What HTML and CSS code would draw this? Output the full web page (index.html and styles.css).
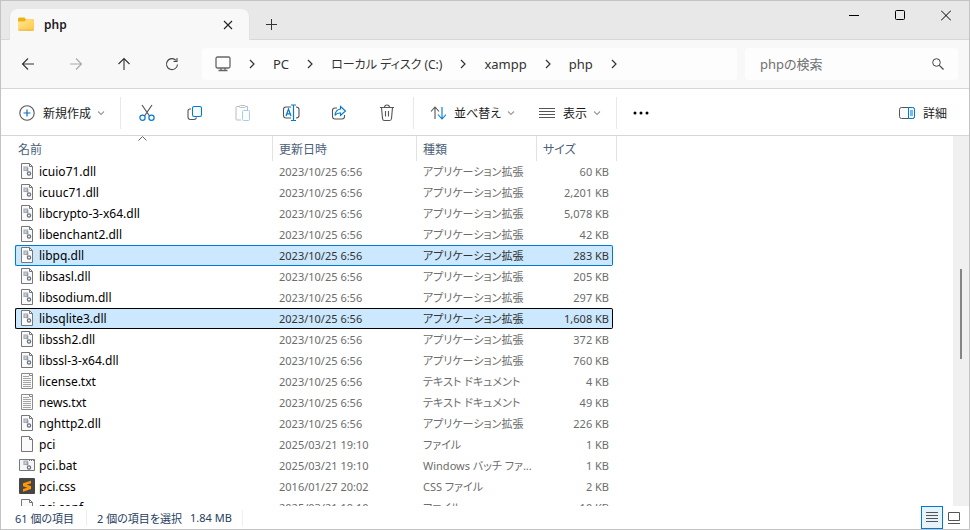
FILE: index.html
```
<!DOCTYPE html>
<html lang="ja">
<head>
<meta charset="utf-8">
<title>php</title>
<link rel="stylesheet" href="styles.css">
</head>
<body>
<svg class="defs" aria-hidden="true">
  <defs>
    <linearGradient id="folder-fill" x1="0" y1="0" x2="1" y2="1"><stop offset="0" stop-color="#ffe69b"/><stop offset="1" stop-color="#ffc93c"/></linearGradient>
  </defs>
  <symbol id="chevron" viewBox="0 0 8 10"><path d="M2 1l4 4-4 4" fill="none" stroke="#333" stroke-width="1.2"/></symbol>
  <symbol id="down" viewBox="0 0 8 6"><path d="M1 1.5l3 3 3-3" fill="none" stroke="#999" stroke-width="1.1"/></symbol>
  <symbol id="gears" viewBox="0 0 16 16">
    <path d="M5 4h3.500v3.500H5z" fill="#c8d0d9" stroke="#a3acb6" stroke-width="1.200"/>
    <circle cx="10" cy="10.500" r="1.600" fill="#fff" stroke="#68717c" stroke-width="1.300"/>
    <path d="M8.500 5v3.500" stroke="#8f99a4" stroke-width="1.500"/>
  </symbol>
  <symbol id="dll" viewBox="0 0 16 16">
    <path d="M2.5.5h8l3 3v12h-11z" fill="#fafafa" stroke="#777"/><path d="M10.5.5v3h3" fill="none" stroke="#777"/>
    <use href="#gears" width="16" height="16"/>
  </symbol>
  <symbol id="txt" viewBox="0 0 16 16">
    <path d="M2.5.5h11v15h-11z" fill="#fafafa" stroke="#8c8c8c"/><path d="M4 3.5h6M4 5.5h8M4 7.5h8M4 9.5h8M4 11.5h8M4 13.5h8" stroke="#a4a4a4"/><path d="M10.5.5v2h3" fill="none" stroke="#8c8c8c"/>
  </symbol>
  <symbol id="file" viewBox="0 0 16 16">
    <path d="M2.5.5h8l3 3v12h-11z" fill="#fafafa" stroke="#777"/><path d="M10.5.5v3h3" fill="none" stroke="#777"/>
  </symbol>
  <symbol id="bat" viewBox="0 0 16 16">
    <path d="M.5 2.5h15v11H.5z" fill="#f5f5f5" stroke="#777"/><path d="M10 3.5h1M12 3.5h1M14 3.5h1" stroke="#777"/>
    <use href="#gears" width="16" height="16"/>
  </symbol>
  <symbol id="subl" viewBox="0 0 16 16">
    <rect width="16" height="16" rx="1" fill="#464646"/><path d="M12 2.7v2.6L7.6 6.7 12 8.1v3L4 13.7v-2.6l4.4-1.4L4 8.3V5.300z" fill="#ff9800"/>
  </symbol>
</svg>
<main class="window">
  <header class="titlebar">
    <div class="tab">
      <svg class="i16" viewBox="0 0 16 16"><path d="M0 2Q0 .5 1.500.5h5L8 2.500h8v3H0z" fill="#f2b010"/><path d="M0 4.500h6.500L8.500 2.500H15q1 0 1 1v9q0 1-1 1H1q-1 0-1-1z" fill="url(#folder-fill)"/><path d="M.5 13.200h15" stroke="#e0a52a" stroke-width=".8"/></svg>
      <span class="tab-name">php</span>
      <button class="tab-close" aria-label="タブを閉じる"><svg width="10" height="10"><path d="M1 1l8 8M9 1L1 9" stroke="#222" stroke-width="1.1"/></svg></button>
    </div>
    <button class="new-tab" aria-label="新しいタブ"><svg width="11" height="11"><path d="M0 5.5h11M5.5 0v11" stroke="#333"/></svg></button>
    <div class="window-buttons">
      <button aria-label="最小化"><svg width="10" height="11"><path d="M0 5.5h10" stroke="#000"/></svg></button>
      <button aria-label="最大化"><svg width="10" height="11"><rect x=".5" y=".5" width="9" height="9" rx="1" fill="none" stroke="#000"/></svg></button>
      <button aria-label="閉じる"><svg width="10" height="11"><path d="M0 .5l10 10M10 .5l-10 10" stroke="#000"/></svg></button>
    </div>
  </header>
  <nav class="navbar">
    <div class="nav-buttons">
      <button aria-label="戻る"><svg width="14" height="14"><path d="M13 7H2M7 1.5L1.5 7 7 12.5" fill="none" stroke="#333" stroke-width="1.1"/></svg></button>
      <button aria-label="進む" disabled><svg width="14" height="14"><path d="M1 7h11M7 1.5L12.500 7 7 12.500" fill="none" stroke="#aaa" stroke-width="1.1"/></svg></button>
      <button aria-label="上へ"><svg width="14" height="14"><path d="M7 13V2M1.500 7L7 1.500 12.500 7" fill="none" stroke="#333" stroke-width="1.1"/></svg></button>
      <button aria-label="更新"><svg width="14" height="14"><path d="M12.500 7.500A5.500 5.500 0 1 1 11 3.300M12 1v3.500H8.500" fill="none" stroke="#444" stroke-width="1.1"/></svg></button>
    </div>
    <div class="address">
      <svg class="i16" viewBox="0 0 16 16"><rect x="1" y="1" width="14" height="11" rx="1.500" fill="none" stroke="#666" stroke-width="1.300"/><path d="M6 12v2M10 12v2M3.500 14.500h9" stroke="#666" stroke-width="1.300"/></svg>
      <svg class="sep"><use href="#chevron"/></svg>
      <a href="#pc">PC</a>
      <svg class="sep"><use href="#chevron"/></svg>
      <a class="drive" href="#c">ローカル ディスク (C:)</a>
      <svg class="sep"><use href="#chevron"/></svg>
      <a href="#xampp">xampp</a>
      <svg class="sep"><use href="#chevron"/></svg>
      <a href="#php">php</a>
      <svg class="sep"><use href="#chevron"/></svg>
    </div>
    <label class="search">
      <input type="text" placeholder="phpの検索" aria-label="phpの検索">
      <svg width="12" height="12"><circle cx="4.500" cy="4.500" r="3.800" fill="none" stroke="#444"/><path d="M7.300 7.300L11.500 11.500" stroke="#444" stroke-width="1.200"/></svg>
    </label>
  </nav>
  <div class="toolbar">
    <div class="group create">
      <button><svg class="i16" viewBox="0 0 16 16"><circle cx="8" cy="8" r="7.200" fill="none" stroke="#555" stroke-width="1.100"/><path d="M4.500 8h7M8 4.500v7" stroke="#0a6fc2" stroke-width="1.200"/></svg><span>新規作成</span><svg class="caret"><use href="#down"/></svg></button>
    </div>
    <div class="group actions">
      <button aria-label="切り取り"><svg width="16" height="18"><path d="M3 1l7.500 11M13 1L5.500 12" stroke="#555" stroke-width="1.200"/><circle cx="3.500" cy="13.800" r="2.600" fill="#fff" stroke="#0078d4" stroke-width="1.200"/><circle cx="12.500" cy="13.800" r="2.600" fill="#fff" stroke="#0078d4" stroke-width="1.200"/></svg></button>
      <button aria-label="コピー"><svg width="16" height="16"><path d="M4 4H3Q1 4 1 6v6q0 2.500 2.500 2.500H7q2 0 2.500-2" fill="none" stroke="#555" stroke-width="1.100"/><rect x="5.500" y="1.500" width="9" height="10" rx="1.800" fill="#f8fbfe" stroke="#0078d4" stroke-width="1.100"/></svg></button>
      <button aria-label="貼り付け" disabled><svg width="16" height="18"><path d="M5 2.500H2Q1 2.500 1 3.500V15q0 1 1 1h4M11 2.500h1.500V6" fill="none" stroke="#bbb"/><rect x="4.500" y="1.500" width="6" height="2" rx="1" fill="#fff" stroke="#bbb"/><rect x="7.500" y="6.500" width="7" height="10" rx="1" fill="#fbfdff" stroke="#a5cdf0"/></svg></button>
      <button aria-label="名前の変更"><svg width="18" height="18"><path d="M9 3H4Q1.500 3 1.500 5.500v6Q1.500 14 4 14h5M14 3q3 0 3 2.500v6Q17 14 14 14" fill="none" stroke="#555" stroke-width="1.100"/><path d="M4 12l2.500-7L9 12M4.800 9.800h3.500M11.500 1v15M9 1h5M9 16.500h5" fill="none" stroke="#0078d4" stroke-width="1.200"/></svg></button>
      <button aria-label="共有"><svg width="16" height="16"><path d="M6 3H4Q1.500 3 1.500 5.500v6Q1.500 14 4 14h7q2.500 0 2.500-2.500V10" fill="none" stroke="#555" stroke-width="1.100"/><path d="M9.500 1.500l5 4.500-5 4.500V8Q6 7.500 4 10.500 4.500 4.500 9.500 4z" fill="#f5faff" stroke="#0078d4" stroke-width="1.100"/></svg></button>
      <button aria-label="削除"><svg width="16" height="18"><path d="M1 3.500h14M5.500 3.500q0-2.500 2.500-2.500t2.500 2.500M2.500 3.500l1 11q.2 2 2 2h5q1.800 0 2-2l1-11M6.500 7v5.500M9.500 7v5.500" fill="none" stroke="#555" stroke-width="1.100"/></svg></button>
    </div>
    <div class="group view">
      <button><svg width="16" height="14"><path d="M5 13V1M1 5.500L5 1l4 4.500" fill="none" stroke="#555" stroke-width="1.100"/><path d="M12 1v12M8 8.500l4 4.500 4-4.500" fill="none" stroke="#0078d4" stroke-width="1.100"/></svg><span>並べ替え</span><svg class="caret"><use href="#down"/></svg></button>
      <button><svg class="i16" viewBox="0 0 16 16"><path d="M0 3.500h16M0 6.500h16M0 9.500h16M0 12.500h16" stroke="#555"/></svg><span>表示</span><svg class="caret"><use href="#down"/></svg></button>
    </div>
    <button class="more" aria-label="その他"><svg width="18" height="4"><circle cx="3" cy="2" r="1.500"/><circle cx="9" cy="2" r="1.500"/><circle cx="15" cy="2" r="1.500"/></svg></button>
    <button class="details"><svg width="16" height="14"><rect x=".5" y="1.500" width="15" height="11" rx="2" fill="#fafafa" stroke="#555"/><path d="M9.500 1.500H13.500q2 0 2 2v7q0 2-2 2h-4z" fill="#f2f9ff" stroke="#0078d4"/><path d="M11 5h3M11 7h3M11 9h3" stroke="#0078d4"/></svg><span>詳細</span></button>
  </div>
  <section class="content">
    <div class="list">
      <svg class="sort-mark" width="9" height="5"><path d="M.5 4.500l4-4 4 4" fill="none" stroke="#666"/></svg>
      <table>
        <colgroup><col class="c-name"><col class="c-date"><col class="c-type"><col class="c-size"><col class="c-end"></colgroup>
        <thead><tr><th>名前</th><th>更新日時</th><th>種類</th><th colspan="2">サイズ</th></tr></thead>
        <tbody>
          <tr><td><svg><use href="#dll"/></svg>icuio71.dll</td><td>2023/10/25 6:56</td><td>アプリケーション拡張</td><td>60 KB</td></tr>
          <tr><td><svg><use href="#dll"/></svg>icuuc71.dll</td><td>2023/10/25 6:56</td><td>アプリケーション拡張</td><td>2,201 KB</td></tr>
          <tr><td><svg><use href="#dll"/></svg>libcrypto-3-x64.dll</td><td>2023/10/25 6:56</td><td>アプリケーション拡張</td><td>5,078 KB</td></tr>
          <tr><td><svg><use href="#dll"/></svg>libenchant2.dll</td><td>2023/10/25 6:56</td><td>アプリケーション拡張</td><td>42 KB</td></tr>
          <tr class="selected"><td><svg><use href="#dll"/></svg>libpq.dll</td><td>2023/10/25 6:56</td><td>アプリケーション拡張</td><td>283 KB</td></tr>
          <tr><td><svg><use href="#dll"/></svg>libsasl.dll</td><td>2023/10/25 6:56</td><td>アプリケーション拡張</td><td>205 KB</td></tr>
          <tr><td><svg><use href="#dll"/></svg>libsodium.dll</td><td>2023/10/25 6:56</td><td>アプリケーション拡張</td><td>297 KB</td></tr>
          <tr class="selected focused"><td><svg><use href="#dll"/></svg>libsqlite3.dll</td><td>2023/10/25 6:56</td><td>アプリケーション拡張</td><td>1,608 KB</td></tr>
          <tr><td><svg><use href="#dll"/></svg>libssh2.dll</td><td>2023/10/25 6:56</td><td>アプリケーション拡張</td><td>372 KB</td></tr>
          <tr><td><svg><use href="#dll"/></svg>libssl-3-x64.dll</td><td>2023/10/25 6:56</td><td>アプリケーション拡張</td><td>760 KB</td></tr>
          <tr><td><svg><use href="#txt"/></svg>license.txt</td><td>2023/10/25 6:56</td><td>テキスト ドキュメント</td><td>4 KB</td></tr>
          <tr><td><svg><use href="#txt"/></svg>news.txt</td><td>2023/10/25 6:56</td><td>テキスト ドキュメント</td><td>49 KB</td></tr>
          <tr><td><svg><use href="#dll"/></svg>nghttp2.dll</td><td>2023/10/25 6:56</td><td>アプリケーション拡張</td><td>226 KB</td></tr>
          <tr><td><svg><use href="#file"/></svg>pci</td><td>2025/03/21 19:10</td><td>ファイル</td><td>1 KB</td></tr>
          <tr><td><svg><use href="#bat"/></svg>pci.bat</td><td>2025/03/21 19:10</td><td>Windows バッチ ファ...</td><td>1 KB</td></tr>
          <tr><td><svg><use href="#subl"/></svg>pci.css</td><td>2016/01/27 20:02</td><td>CSS ファイル</td><td>2 KB</td></tr>
          <tr><td><svg><use href="#file"/></svg>pci.conf</td><td>2025/03/21 19:10</td><td>ファイル</td><td>10 KB</td></tr>
        </tbody>
      </table>
    </div>
    <div class="scrollbar"><div class="thumb"></div></div>
  </section>
  <footer class="statusbar">
    <span class="count">61 個の項目</span>
    <span class="selection"><span>2 個の項目を選択</span><span>1.84 MB</span></span>
    <div class="view-modes">
      <button class="mode active" aria-label="詳細表示"><svg width="12" height="11"><path d="M0 .5h12M0 3.500h12M0 6.500h12M0 9.500h12" stroke="#555"/></svg></button>
      <button class="mode" aria-label="大アイコン"><svg width="12" height="12"><path d="M.5.5h11v8H.5zM0 11.500h12" fill="none" stroke="#555"/></svg></button>
    </div>
  </footer>
</main>
</body>
</html>
```
FILE: styles.css
```
* { box-sizing: border-box; }
html, body { height: 100%; margin: 0; }
body {
  font-family: "Noto Sans", "Noto Sans CJK JP", sans-serif;
  font-size: 12px;
  font-feature-settings: "palt";
  color: #1b1b1b;
}
button { display: flex; align-items: center; justify-content: center; padding: 0; border: 0; background: none; font: inherit; color: inherit; }
svg { display: block; flex: none; }
.defs { position: absolute; width: 0; height: 0; }
.i16 { width: 16px; height: 16px; }

.window { display: flex; flex-direction: column; height: 100vh; border: 1px solid #c3c3c3; background: #fff; overflow: hidden; }

.titlebar { display: flex; flex: none; height: 39px; background: #e8e8e8; box-shadow: inset 0 -1px #d8d8d8; }
.tab { display: flex; align-items: center; width: 241px; margin: 8px 0 0 8px; padding: 0 16px 0 8px; border: 1px solid #e2e2e2; border-width: 0 1px; border-radius: 8px 8px 0 0; background: #f8f8f8; }
.tab-name { flex: 1; margin-left: 10px; font-weight: 600; }
.new-tab { width: 43px; padding-top: 8px; }
.window-buttons { display: flex; margin-left: auto; height: 29px; }
.window-buttons button { width: 46px; }

.navbar { display: flex; flex: none; align-items: center; gap: 8px; height: 49px; padding: 0 11px 0 3px; border-bottom: 1px solid #d6d6d6; background: #f8f8f8; font-size: 13px; }
.nav-buttons { display: flex; flex: none; width: 190px; }
.nav-buttons button { flex: none; width: 48px; height: 32px; }
.address { display: flex; flex: 1; align-items: center; gap: 16px; height: 32px; padding: 0 13px; border-radius: 4px; background: #fdfdfd; white-space: nowrap; }
.address a { color: #333; text-decoration: none; }
.address .drive { font-size: 12px; }
.sep { width: 8px; height: 10px; margin: 0 1px; }
.search { display: flex; flex: 0 1 213px; min-width: 0; align-items: center; height: 32px; padding: 0 14px 0 15px; border-radius: 4px; background: #fdfdfd; }
.search input { flex: 1; min-width: 0; padding: 0; border: 0; background: none; font: inherit; outline: 0; }
.search input::placeholder { color: #707070; }

.toolbar { display: flex; flex: none; align-items: center; height: 47px; padding: 2px 22px 0 0; border-bottom: 1px solid #d6d6d6; }
.group { display: flex; align-items: center; height: 32px; border-right: 1px solid #e8e8e8; }
.toolbar button { gap: 8px; height: 32px; }
.toolbar .caret { width: 8px; height: 6px; margin-left: -2px; }
.create { width: 120px; padding-left: 18px; }
.actions { width: 293px; padding-left: 2px; }
.actions button { width: 48px; }
.view { width: 203px; padding-left: 16px; gap: 24px; }
.more { width: 48px; }
.details { margin-left: auto; }

.content { display: flex; flex: 1; min-height: 0; }
.list { position: relative; flex: 1; overflow: hidden; padding-left: 14px; }
.sort-mark { position: absolute; left: 137px; top: 0; }
table { width: 602px; table-layout: fixed; border-collapse: separate; border-spacing: 0; }
.c-name { width: 258px; }
.c-date { width: 144px; }
.c-type { width: 120px; }
.c-size { width: 76px; }
.c-end { width: 4px; }
th { height: 25px; padding: 0 6px; border-right: 1px solid #e2e2e2; color: #4c607a; font-weight: 400; text-align: left; }
th:first-child { padding-left: 3px; }
td { height: 21px; padding: 0 6px; border: 0 solid transparent; border-width: 1px 0; font-size: 11px; line-height: 19px; color: #6d6d6d; white-space: nowrap; overflow: hidden; }
td:first-child { padding-left: 3px; border-left-width: 1px; font-size: 12px; color: #000; }
td:nth-child(4) { padding: 0 3px 0 0; border-right-width: 1px; text-align: right; }
td svg { float: left; width: 16px; height: 16px; margin: 1px 4px 0 0; }
.selected td { background: #cce8ff; border-color: #0078d4; color: #333; }
.selected td:first-child { border-radius: 2px 0 0 2px; color: #000; }
.selected td:last-child { border-radius: 0 2px 2px 0; }
.selected.focused td { border-color: #000; }

.scrollbar { width: 16px; padding: 133px 7px 0 7px; background: #f0f0f0; }
.thumb { width: 2px; height: 90px; background: #858585; }

.statusbar { display: flex; flex: none; align-items: center; height: 23px; padding: 0 4px 0 14px; font-size: 11px; color: #26405f; }
.count { padding-right: 12px; border-right: 1px solid #eee; }
.selection { display: flex; gap: 8px; padding: 0 10px; border-right: 1px solid #eee; }
.view-modes { display: flex; margin-left: auto; }
.mode { width: 22px; height: 23px; }
.mode.active { border: 1px solid #0078d4; background: #e5f3fb; }
```
